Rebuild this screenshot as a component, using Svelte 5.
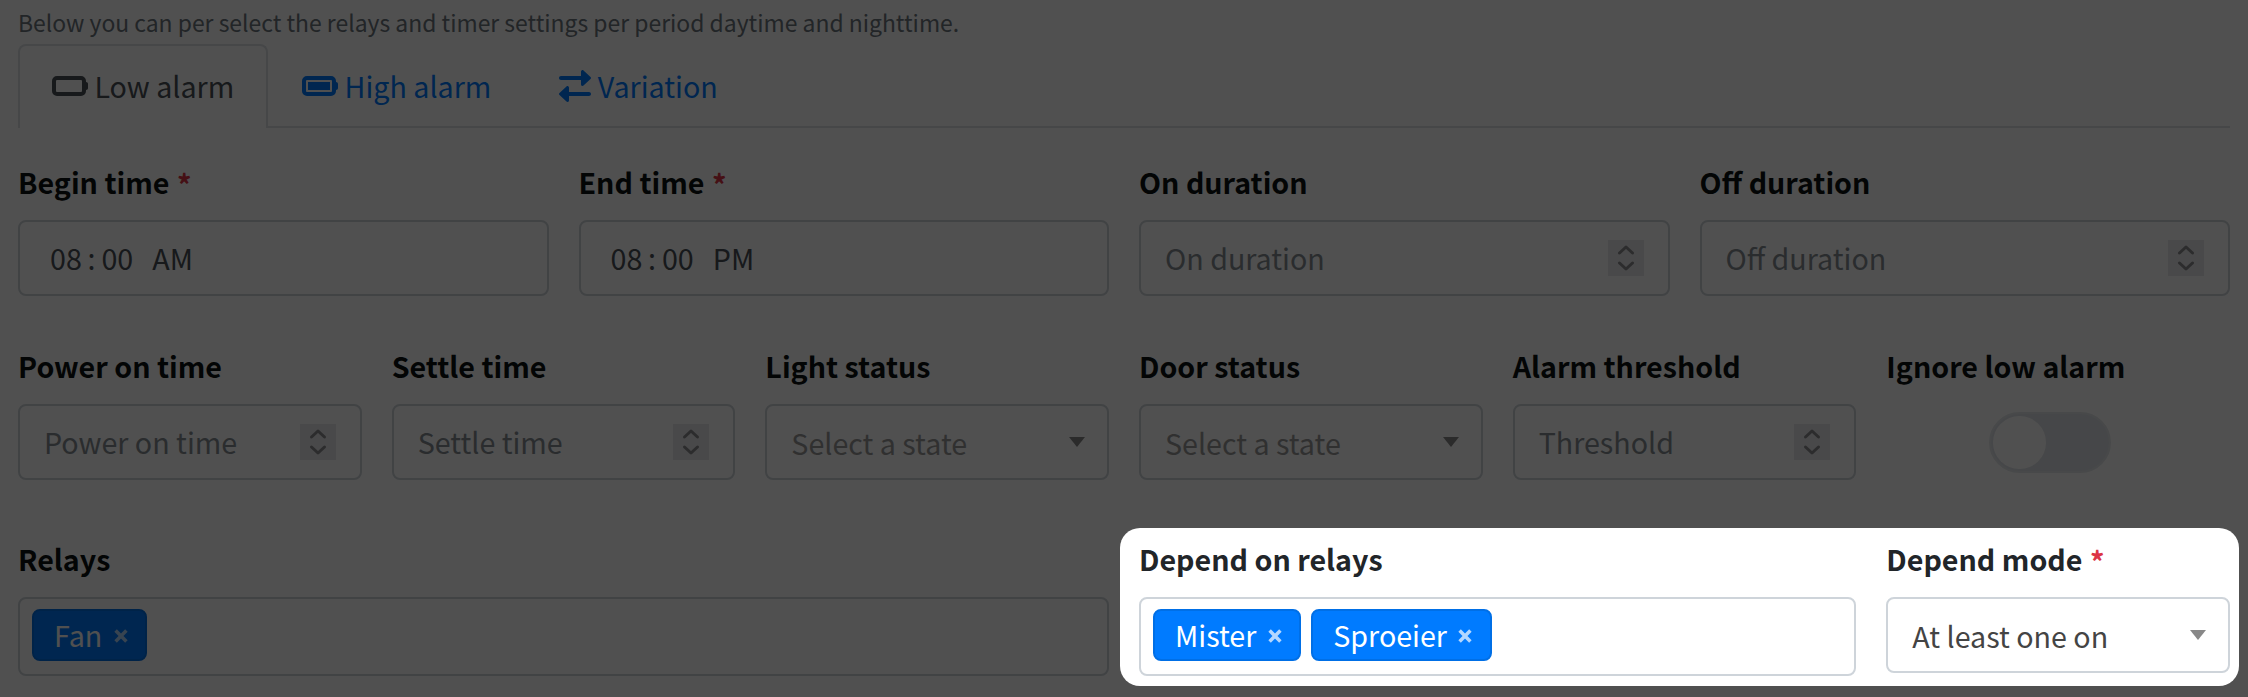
<script>
  const timers = [
    { label: 'Begin time', required: true, time: ['08', '00', 'AM'] },
    { label: 'End time', required: true, time: ['08', '00', 'PM'] },
    { label: 'On duration', number: 'On duration' },
    { label: 'Off duration', number: 'Off duration' }
  ];
  const states = [
    { label: 'Power on time', number: 'Power on time' },
    { label: 'Settle time', number: 'Settle time' },
    { label: 'Light status', select: 'Select a state' },
    { label: 'Door status', select: 'Select a state' },
    { label: 'Alarm threshold', number: 'Threshold' },
    { label: 'Ignore low alarm', toggle: true }
  ];
  const relays = [
    { label: 'Relays', tags: ['Fan'], span: 3 },
    { label: 'Depend on relays', tags: ['Mister', 'Sproeier'], span: 2, lit: true },
    { label: 'Depend mode', required: true, select: 'At least one on', chosen: true, lit: true }
  ];
</script>

{#snippet field(f)}
  <div class="field" class:span2={f.span === 2} class:span3={f.span === 3}>
    <div class="label" class:lit={f.lit}>{f.label}{#if f.required}<span class="star">*</span>{/if}</div>
    {#if f.time}
      <div class="control time">
        <span>{f.time[0]}</span><span class="colon">:</span><span>{f.time[1]}</span><span class="half">{f.time[2]}</span>
      </div>
    {:else if f.number}
      <div class="control">
        <span class="placeholder">{f.number}</span>
        <svg class="spinner" viewBox="0 0 36 36">
          <path d="M11.5 13 18 7l6.5 6M11.5 23l6.5 6 6.5-6" />
        </svg>
      </div>
    {:else if f.select}
      <div class="control select" class:chosen={f.chosen}>
        <span>{f.select}</span>
        <i class="caret"></i>
      </div>
    {:else if f.toggle}
      <div class="toggle"><i></i></div>
    {:else}
      <div class="control tags">
        {#each f.tags as tag}
          <span class="tag">{tag}<svg viewBox="0 0 14 14"><path d="M1.6 1.6l10.8 10.8M12.4 1.6L1.6 12.4" /></svg></span>
        {/each}
      </div>
    {/if}
  </div>
{/snippet}

<main>
  <p class="hint">Below you can per select the relays and timer settings per period daytime and nighttime.</p>

  <nav>
    <a class="tab active">
      <svg class="battery" viewBox="0 0 576 512">
        <rect x="32" y="128" width="480" height="256" rx="48" />
        <path class="solid" d="M544 192c18 0 32 14 32 32v64c0 18-14 32-32 32z" />
      </svg>
      <span>Low alarm</span>
    </a>
    <a class="tab">
      <svg class="battery" viewBox="0 0 576 512">
        <rect x="32" y="128" width="480" height="256" rx="48" />
        <path class="solid" d="M544 192c18 0 32 14 32 32v64c0 18-14 32-32 32zM96 192h352v128H96z" />
      </svg>
      <span>High alarm</span>
    </a>
    <a class="tab">
      <svg class="arrows" viewBox="0 0 512 512">
        <path d="M32 160h319.9l.1 72c0 9.5 5.6 18.2 14.4 22s18.9 2.1 25.9-4.4l112-104c10.2-9.500 10.2-25.700 0-35.200l-112-104c-7-6.500-17.200-8.200-25.900-4.400S352 14.500 352 24l-.1 72H32c-17.700 0-32 14.300-32 32s14.300 32 32 32zM480 352H160.100L160 280c0-9.500-5.600-18.200-14.400-22s-18.900-2.100-25.900 4.400l-112 104c-10.200 9.500-10.200 25.700 0 35.200l112 104c7 6.500 17.200 8.200 25.900 4.400S160 497.500 160 488l.1-72H480c17.700 0 32-14.300 32-32s-14.300-32-32-32z" />
      </svg>
      <span>Variation</span>
    </a>
  </nav>

  <section class="row four">
    {#each timers as f}{@render field(f)}{/each}
  </section>
  <section class="row six">
    {#each states as f}{@render field(f)}{/each}
  </section>
  <section class="row six last">
    {#each relays as f}{@render field(f)}{/each}
  </section>

  <div class="spotlight"></div>
</main>

<style>
  :global(body) {
    margin: 0;
    background: #fff;
  }
  main {
    position: relative;
    box-sizing: border-box;
    width: 2248px;
    height: 697px;
    padding: 4px 18px 0;
    overflow: hidden;
    background: #fff;
    color: #212529;
    font-family: 'Noto Sans CJK SC', 'Noto Sans', sans-serif;
    font-size: 28.65px;
    line-height: 48px;
  }
  .hint {
    margin: 0;
    height: 40px;
    line-height: 36px;
    font-size: 22.92px;
    color: #6c757d;
    white-space: nowrap;
  }
  nav {
    display: flex;
    height: 84px;
    box-sizing: border-box;
    border-bottom: 2px solid #dee2e6;
  }
  .tab {
    display: flex;
    align-items: center;
    gap: 6.4px;
    box-sizing: border-box;
    height: 84px;
    padding: 0 32px 2px;
    border: 2px solid transparent;
    border-bottom: 0;
    border-radius: 8px 8px 0 0;
    color: #007bff;
    white-space: nowrap;
  }
  .tab.active {
    color: #495057;
    background: #fff;
    border-color: #dee2e6;
  }
  .tab svg {
    height: 32px;
    fill: currentColor;
  }
  .battery {
    width: 36px;
  }
  .battery rect {
    fill: none;
    stroke: currentColor;
    stroke-width: 64;
  }
  .arrows {
    width: 32px;
  }
  .row {
    display: grid;
    column-gap: 30px;
    margin-top: 32px;
    height: 152px;
  }
  .four {
    grid-template-columns: repeat(4, 1fr);
  }
  .six {
    grid-template-columns: repeat(6, 1fr);
  }
  .row.last {
    margin-top: 41px;
  }
  .span2 {
    grid-column: span 2;
  }
  .span3 {
    grid-column: span 3;
  }
  .label {
    height: 60px;
    line-height: 44px;
    font-weight: 700;
    color: #0c1012;
    white-space: nowrap;
  }
  .label.lit {
    color: #212529;
  }
  .star {
    position: relative;
    top: 1.5px;
    margin-left: 7.5px;
    color: #dc3545;
  }
  .control {
    display: flex;
    align-items: center;
    justify-content: space-between;
    box-sizing: border-box;
    height: 76px;
    padding: 0 24px;
    border: 2px solid #ced4da;
    border-radius: 8px;
    white-space: nowrap;
  }
  .time {
    justify-content: flex-start;
    padding-left: 30px;
    color: #495057;
  }
  .colon {
    margin: 0 6px 0 5.7px;
  }
  .half {
    margin-left: 19px;
  }
  .placeholder {
    color: #868e93;
  }
  .spinner {
    width: 36px;
    height: 36px;
    background: #e8e8eb;
    fill: none;
    stroke: #8d8d8f;
    stroke-width: 3;
    stroke-linecap: round;
    stroke-linejoin: round;
  }
  .select {
    padding-right: 22px;
    color: #999;
  }
  .select span {
    padding-top: 2px;
  }
  .select.chosen {
    color: #444;
  }
  .caret {
    border: 8px solid transparent;
    border-top: 10px solid #888;
    border-bottom: 0;
  }
  .toggle {
    box-sizing: border-box;
    width: 122px;
    height: 61px;
    margin: 8px 0 0 102.6px;
    padding: 2px;
    border: 2px solid #e6e9ec;
    border-radius: 31px;
    background: #e0e3e8;
  }
  .toggle i {
    display: block;
    width: 53px;
    height: 53px;
    border-radius: 50%;
    background: #fff;
  }
  .tags {
    justify-content: flex-start;
    align-items: flex-start;
    gap: 10px;
    height: 79px;
    padding: 10px 12px;
  }
  .tag {
    display: flex;
    align-items: center;
    box-sizing: border-box;
    height: 52px;
    padding: 0 17.5px 0 20px;
    border: 2px solid #006fe6;
    border-radius: 8px;
    background: #007bff;
    color: #fff;
  }
  .tag svg {
    width: 14px;
    height: 14px;
    margin: 2px 0 0 11.5px;
    fill: none;
    stroke: #b3d7ff;
    stroke-width: 3.5;
  }
  .spotlight {
    position: absolute;
    left: 1120px;
    top: 528px;
    width: 1119px;
    height: 158px;
    border-radius: 20px;
    box-shadow: 0 0 0 2300px rgba(0, 0, 0, 0.687);
  }
</style>
